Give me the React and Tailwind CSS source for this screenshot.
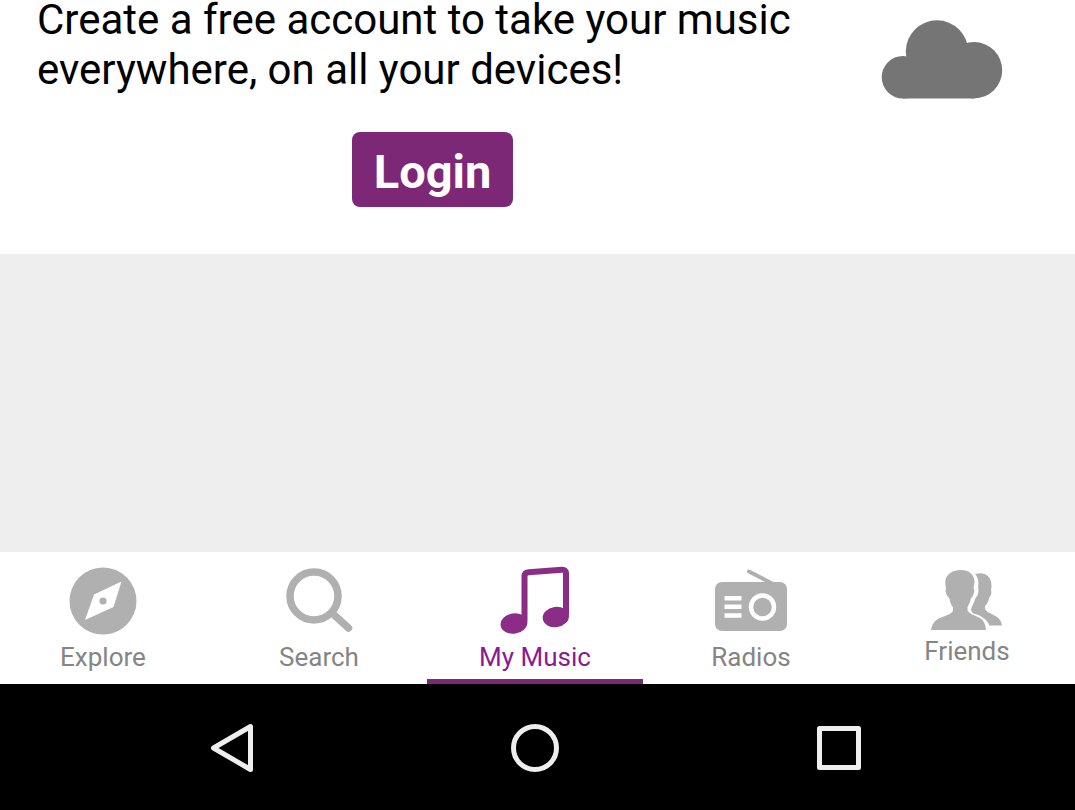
import React from "react";

function CloudIcon() {
  return (
    <svg viewBox="0 0 122 80" className="h-20 w-[122px] fill-[#757575]" aria-hidden="true">
      <circle cx="22" cy="57.200" r="21.300" />
      <circle cx="56" cy="31.500" r="31.200" />
      <circle cx="93" cy="50.300" r="28.200" />
      <path d="M22 40H93V78.500H22Z" />
    </svg>
  );
}

function CompassIcon() {
  return (
    <svg viewBox="0 0 72 72" className="size-[72px]" aria-hidden="true">
      <circle cx="36" cy="36" r="33.500" fill="#b0b0b0" />
      <path d="M54.500 16.500L46.500 42L18 55L27 29.500Z" fill="#fff" />
      <circle cx="36" cy="36" r="3.600" fill="#b0b0b0" />
    </svg>
  );
}

function MagnifierIcon() {
  return (
    <svg viewBox="0 0 72 72" className="size-[72px]" fill="none" stroke="#b0b0b0" aria-hidden="true">
      <circle cx="31" cy="31" r="24" strokeWidth="7.500" />
      <path d="M49 48L65.500 63" strokeWidth="7.500" strokeLinecap="round" />
    </svg>
  );
}

function NoteIcon() {
  return (
    <svg viewBox="0 0 72 72" className="size-[72px]" aria-hidden="true">
      <path d="M25.500 56V11.500Q25.500 7.500 29.500 7.200L63 4.700Q67 4.500 67 8.500V50" fill="none" stroke="#8b2c86" strokeWidth="6" strokeLinejoin="round" />
      <ellipse cx="15" cy="58.500" rx="13.500" ry="10.200" transform="rotate(-8 15 58.500)" fill="#8b2c86" />
      <ellipse cx="56.800" cy="52" rx="13.200" ry="10.200" transform="rotate(-8 56.800 52)" fill="#8b2c86" />
    </svg>
  );
}

function RadioIcon() {
  return (
    <svg viewBox="0 0 72 72" className="size-[72px]" aria-hidden="true">
      <path d="M34 6.500L58 19" stroke="#b0b0b0" strokeWidth="4" strokeLinecap="round" />
      <rect x="0" y="17" width="72" height="49" rx="7" fill="#b0b0b0" />
      <path d="M9.500 33.300H26.500M9.500 41.800H26.500M9.500 50.500H26.500" stroke="#fff" strokeWidth="4.500" />
      <circle cx="47.500" cy="42" r="11.500" fill="none" stroke="#fff" strokeWidth="4.500" />
    </svg>
  );
}

function FriendsIcon() {
  return (
    <svg viewBox="0 0 72 72" className="size-[72px] fill-[#b0b0b0]" aria-hidden="true">
      <path d="M30 5C38 5 43.500 9.500 43.500 17C43.500 19 42.800 21 42.500 23C43.500 24 43.500 27 42.500 29C42 31 41 32 40 33C39.500 37 37.500 40 36.500 42V45.500C38.500 49 43 50 48 52.500C52 54.500 54.500 58 55 65H0C1 59 4 55 9 53C14 50.800 19.500 49.500 22 46V42.500C20 40 19 37 18.300 33C17 32 15.500 30 15 28C14.500 26 14.500 24 15 23C14.300 20 14.200 17 14.500 15C15.500 9 22 5 30 5Z" />
      <path d="M44 9C54 6 60.500 11 60.500 21C60.500 23 60 24 60 25C61 27 60 31 58 33C57.500 37 56 39 54 41C53.500 45 55.500 46 58.500 48C64.500 51 70 53 71 60.500H58.500C56 54 49 50 42.500 48.500C40 47 39.500 44 41 41.500C43 38 43.500 36 44.500 33C47.500 30 48 26 47 22C48 17 47 12 44 9Z" />
    </svg>
  );
}

const tabs = [
  { label: "Explore", Icon: CompassIcon },
  { label: "Search", Icon: MagnifierIcon },
  { label: "My Music", Icon: NoteIcon, active: true },
  { label: "Radios", Icon: RadioIcon },
  { label: "Friends", Icon: FriendsIcon, compact: true },
];

function Tab({ label, Icon, active, compact }) {
  return (
    <a
      href="#"
      aria-current={active ? "page" : undefined}
      className={`flex h-[132px] flex-col items-center border-b-[5px] pt-[13px] ${
        active ? "border-[#7a2a72] text-[#8c1a90]" : "border-transparent text-[#858585]"
      }`}
    >
      <Icon />
      <span className={`text-[26px] leading-8 ${compact ? "-mt-0.5" : "mt-1"}`}>{label}</span>
    </a>
  );
}

export default function App() {
  return (
    <div className="flex min-h-screen flex-col bg-[#eeeeee] font-['Roboto',sans-serif]">
      <section className="flex items-start bg-white pb-[47px]">
        <div className="-mt-[5px] flex flex-1 flex-col items-center pl-[37px]">
          <p className="w-full text-[42px] leading-[50px] text-black">
            Create a free account to take your music everywhere, on all your devices!
          </p>
          <button
            type="button"
            className="mt-[37px] mr-[37px] h-[75px] w-[161px] rounded-lg bg-[#7d2877] pt-1 text-[47px] leading-none font-bold text-white"
          >
            Login
          </button>
        </div>
        <div className="mt-5 mr-[72px] ml-4">
          <CloudIcon />
        </div>
      </section>

      <main className="flex-1" />

      <nav aria-label="Main" className="-ml-[5px] grid grid-cols-5 bg-white">
        {tabs.map((tab) => (
          <Tab key={tab.label} {...tab} />
        ))}
      </nav>

      <footer className="grid h-[126px] grid-cols-3 place-items-center bg-black pt-px pr-[84px] pl-20">
        <button type="button" aria-label="Back">
          <svg viewBox="0 0 52 52" className="size-[52px]" fill="none" stroke="#eeeeee" strokeWidth="5" strokeLinejoin="round">
            <path d="M44.500 4.500V47.500L7.500 26Z" />
          </svg>
        </button>
        <button type="button" aria-label="Home">
          <svg viewBox="0 0 52 52" className="size-[52px]" fill="none" stroke="#eeeeee" strokeWidth="5">
            <circle cx="26" cy="26" r="21.500" />
          </svg>
        </button>
        <button type="button" aria-label="Recent apps">
          <svg viewBox="0 0 52 52" className="size-[52px]" fill="none" stroke="#eeeeee" strokeWidth="5" strokeLinejoin="round">
            <rect x="6.500" y="6.500" width="39" height="39" />
          </svg>
        </button>
      </footer>
    </div>
  );
}
